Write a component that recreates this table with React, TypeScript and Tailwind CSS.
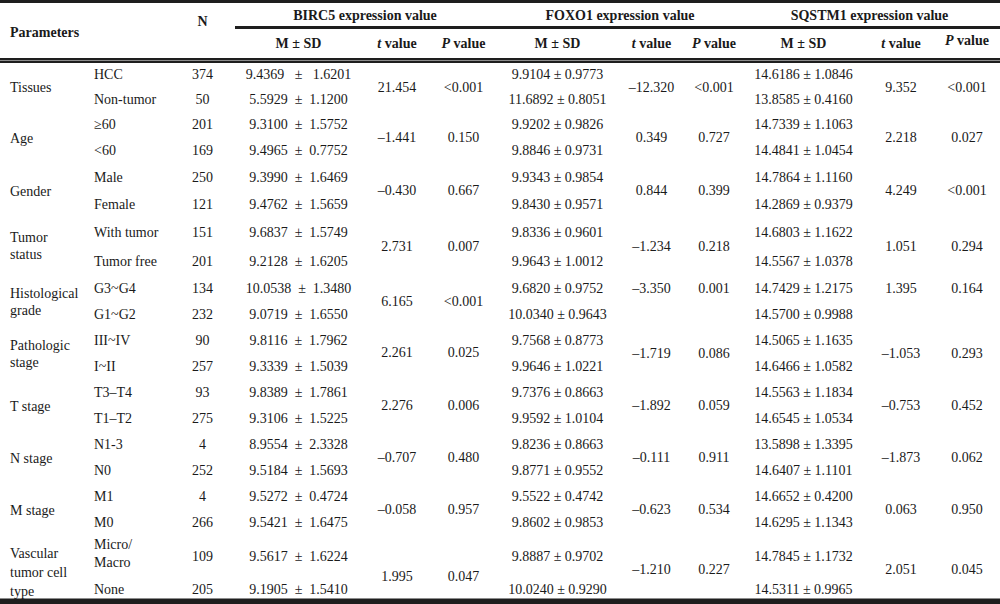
import React from "react";

type Group = {
  label: string[];
  labelCls?: string;
  rows: string;
  row2?: string;
  subs: React.ReactNode[];
  n: string[];
  b: string[];
  bt: string;
  bp: string;
  bCls?: string;
  f: string[];
  ft: string;
  fp: string;
  fCls?: string;
  s: string[];
  st: string;
  sp: string;
  sCls?: string;
};

const COLS =
  "grid grid-cols-[88px_82px_65px_127px_70px_63px_125px_63px_62px_117px_78px_60px]";

const GROUPS: Group[] = [
  {
    label: ["Tissues"],
    rows: "grid-rows-[24px_25px]",
    subs: ["HCC", "Non-tumor"],
    n: ["374", "50"],
    b: ["9.4369   ±   1.6201", "5.5929  ±  1.1200"],
    bt: "21.454",
    bp: "<0.001",
    f: ["9.9104 ± 0.9773", "11.6892 ± 0.8051"],
    ft: "–12.320",
    fp: "<0.001",
    s: ["14.6186 ± 1.0846", "13.8585 ± 0.4160"],
    st: "9.352",
    sp: "<0.001",
  },
  {
    label: ["Age"],
    rows: "grid-rows-[26px_26px]",
    subs: ["≥60", "<60"],
    n: ["201", "169"],
    b: ["9.3100  ±  1.5752", "9.4965  ±  0.7752"],
    bt: "–1.441",
    bp: "0.150",
    f: ["9.9202 ± 0.9826", "9.8846 ± 0.9731"],
    ft: "0.349",
    fp: "0.727",
    s: ["14.7339 ± 1.1063", "14.4841 ± 1.0454"],
    st: "2.218",
    sp: "0.027",
  },
  {
    label: ["Gender"],
    rows: "grid-rows-[27px_27px]",
    subs: ["Male", "Female"],
    n: ["250", "121"],
    b: ["9.3990  ±  1.6469", "9.4762  ±  1.5659"],
    bt: "–0.430",
    bp: "0.667",
    f: ["9.9343 ± 0.9854", "9.8430 ± 0.9571"],
    ft: "0.844",
    fp: "0.399",
    s: ["14.7864 ± 1.1160", "14.2869 ± 0.9379"],
    st: "4.249",
    sp: "<0.001",
  },
  {
    label: ["Tumor", "status"],
    labelCls: "pb-[2px]",
    rows: "grid-rows-[29px_29px]",
    subs: ["With tumor", "Tumor free"],
    n: ["151", "201"],
    b: ["9.6837  ±  1.5749", "9.2128  ±  1.6205"],
    bt: "2.731",
    bp: "0.007",
    f: ["9.8336 ± 0.9601", "9.9643 ± 1.0012"],
    ft: "–1.234",
    fp: "0.218",
    s: ["14.6803 ± 1.1622", "14.5567 ± 1.0378"],
    st: "1.051",
    sp: "0.294",
  },
  {
    label: ["Histological", "grade"],
    rows: "grid-rows-[26px_26px]",
    subs: ["G3~G4", "G1~G2"],
    n: ["134", "232"],
    b: ["10.0538  ±  1.3480", "9.0719  ±  1.6550"],
    bt: "6.165",
    bp: "<0.001",
    f: ["9.6820 ± 0.9752", "10.0340 ± 0.9643"],
    ft: "–3.350",
    fp: "0.001",
    fCls: "items-start pt-[5px]",
    s: ["14.7429 ± 1.2175", "14.5700 ± 0.9988"],
    st: "1.395",
    sp: "0.164",
    sCls: "items-start pt-[5px]",
  },
  {
    label: ["Pathologic", "stage"],
    rows: "grid-rows-[26px_26px]",
    subs: ["III~IV", "I~II"],
    n: ["90", "257"],
    b: ["9.8116  ±  1.7962", "9.3339  ±  1.5039"],
    bt: "2.261",
    bp: "0.025",
    bCls: "items-center pb-[2px]",
    f: ["9.7568 ± 0.8773", "9.9646 ± 1.0221"],
    ft: "–1.719",
    fp: "0.086",
    s: ["14.5065 ± 1.1635", "14.6466 ± 1.0582"],
    st: "–1.053",
    sp: "0.293",
  },
  {
    label: ["T stage"],
    rows: "grid-rows-[26px_26px]",
    subs: ["T3–T4", "T1–T2"],
    n: ["93", "275"],
    b: ["9.8389  ±  1.7861", "9.3106  ±  1.5225"],
    bt: "2.276",
    bp: "0.006",
    f: ["9.7376 ± 0.8663", "9.9592 ± 1.0104"],
    ft: "–1.892",
    fp: "0.059",
    s: ["14.5563 ± 1.1834", "14.6545 ± 1.0534"],
    st: "–0.753",
    sp: "0.452",
  },
  {
    label: ["N stage"],
    rows: "grid-rows-[26px_26px]",
    subs: ["N1-3", "N0"],
    n: ["4", "252"],
    b: ["8.9554  ±  2.3328", "9.5184  ±  1.5693"],
    bt: "–0.707",
    bp: "0.480",
    f: ["9.8236 ± 0.8663", "9.8771 ± 0.9552"],
    ft: "–0.111",
    fp: "0.911",
    s: ["13.5898 ± 1.3395", "14.6407 ± 1.1101"],
    st: "–1.873",
    sp: "0.062",
  },
  {
    label: ["M stage"],
    rows: "grid-rows-[26px_26px]",
    subs: ["M1", "M0"],
    n: ["4", "266"],
    b: ["9.5272  ±  0.4724", "9.5421  ±  1.6475"],
    bt: "–0.058",
    bp: "0.957",
    f: ["9.5522 ± 0.4742", "9.8602 ± 0.9853"],
    ft: "–0.623",
    fp: "0.534",
    s: ["14.6652 ± 0.4200", "14.6295 ± 1.1343"],
    st: "0.063",
    sp: "0.950",
  },
  {
    label: ["Vascular", "tumor cell", "type"],
    labelCls: "pt-[10px] leading-[19px]",
    rows: "grid-rows-[42px_20px]",
    row2: "items-end",
    subs: [
      <span className="leading-[18px] pb-[6px]">
        Micro/
        <br />
        Macro
      </span>,
      "None",
    ],
    n: ["109", "205"],
    b: ["9.5617  ±  1.6224", "9.1905  ±  1.5410"],
    bt: "1.995",
    bp: "0.047",
    bCls: "items-center pt-[20px]",
    f: ["9.8887 ± 0.9702", "10.0240 ± 0.9290"],
    ft: "–1.210",
    fp: "0.227",
    fCls: "items-center pt-[6px]",
    s: ["14.7845 ± 1.1732", "14.5311 ± 0.9965"],
    st: "2.051",
    sp: "0.045",
    sCls: "items-center pt-[6px]",
  },
];

function GroupRows({ g }: { g: Group }) {
  const row = (i: number) => (i === 1 && g.row2 ? g.row2 : "items-center");
  const span = (cls?: string, last?: boolean) =>
    `row-span-2 flex justify-center ${cls ?? "items-center"} ${last ? "pr-[6px]" : ""}`;
  return (
    <div className={`${COLS} ${g.rows}`}>
      <div className={`row-span-2 flex items-center pl-[10px] leading-[17px] ${g.labelCls ?? ""}`}>
        <div>
          {g.label.map((l, i) => (
            <div key={i}>{l}</div>
          ))}
        </div>
      </div>
      {[0, 1].map((i) => (
        <React.Fragment key={i}>
          <div className={`flex pl-[6px] ${row(i)}`}>{g.subs[i]}</div>
          <div className={`flex justify-center ${row(i)}`}>{g.n[i]}</div>
          <div className={`flex justify-center whitespace-pre ${row(i)}`}>{g.b[i]}</div>
          {i === 0 && (
            <>
              <div className={span(g.bCls)}>{g.bt}</div>
              <div className={span(g.bCls)}>{g.bp}</div>
            </>
          )}
          <div className={`flex justify-center ${row(i)}`}>{g.f[i]}</div>
          {i === 0 && (
            <>
              <div className={span(g.fCls)}>{g.ft}</div>
              <div className={span(g.fCls)}>{g.fp}</div>
            </>
          )}
          <div className={`flex justify-center ${row(i)}`}>{g.s[i]}</div>
          {i === 0 && (
            <>
              <div className={span(g.sCls)}>{g.st}</div>
              <div className={span(g.sCls, true)}>{g.sp}</div>
            </>
          )}
        </React.Fragment>
      ))}
    </div>
  );
}

function Header() {
  const group = "col-span-3 flex items-center justify-center pt-[3px] border-b-[3px] border-[#1e1e1e]";
  const sub = "flex items-center justify-center";
  return (
    <div className={`${COLS} grid-rows-[26px_29px] font-bold`}>
      <div className="row-span-2 col-span-2 flex items-center pt-[4px] pl-[10px]">Parameters</div>
      <div className="row-span-2 flex items-start justify-center pt-[11px]">N</div>
      <div className={group}>BIRC5 expression value</div>
      <div className={group}>FOXO1 expression value</div>
      <div className={`${group} pr-[6px]`}>SQSTM1 expression value</div>
      <div className={sub}>M ± SD</div>
      <div className={sub}>
        <i>t</i>&nbsp;value
      </div>
      <div className={sub}>
        <i>P</i>&nbsp;value
      </div>
      <div className={sub}>M ± SD</div>
      <div className={sub}>
        <i>t</i>&nbsp;value
      </div>
      <div className={sub}>
        <i>P</i>&nbsp;value
      </div>
      <div className={sub}>M ± SD</div>
      <div className={sub}>
        <i>t</i>&nbsp;value
      </div>
      <div className={`${sub} pr-[6px] pb-[5px]`}>
        <i>P</i>&nbsp;value
      </div>
    </div>
  );
}

export default function App() {
  return (
    <div className="w-[1000px] h-[604px] overflow-hidden bg-white font-['Liberation_Serif','Times_New_Roman',serif] text-[14px] leading-[16px] text-[#1a1a1a]">
      <div className="h-[3px] bg-[#1e1e1e]" />
      <Header />
      <div className="h-[5px] border-y-2 border-[#1e1e1e] bg-[#8c8c8c]" />
      {GROUPS.map((g, i) => (
        <GroupRows key={i} g={g} />
      ))}
      <div className="h-px bg-[#8c8c8c]" />
      <div className="h-[5px] bg-[#1e1e1e]" />
    </div>
  );
}
